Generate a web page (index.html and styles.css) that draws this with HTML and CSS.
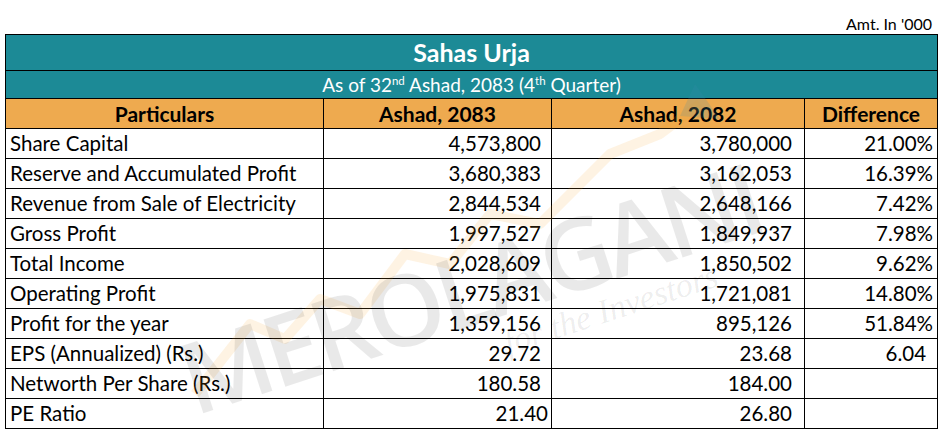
FILE: index.html
```html
<!DOCTYPE html>
<html>
<head>
<meta charset="utf-8">
<link rel="stylesheet" href="styles.css">
</head>
<body>
<div class="page">
  <div class="unit">Amt. In '000</div>
  <div class="table-wrap">
    <table class="fin">
      <colgroup>
        <col class="c1"><col class="c2"><col class="c3"><col class="c4">
      </colgroup>
      <tr class="title"><td colspan="4">Sahas Urja</td></tr>
      <tr class="sub"><td colspan="4">As of 32<sup>nd</sup> Ashad, 2083 (4<sup>th</sup> Quarter)</td></tr>
      <tr class="head"><td>Particulars</td><td>Ashad, 2083</td><td>Ashad, 2082</td><td>Difference</td></tr>
      <tr><td class="lbl">Share Capital</td><td class="n2">4,573,800</td><td class="n3">3,780,000</td><td class="n4">21.00%</td></tr>
      <tr><td class="lbl">Reserve and Accumulated Profit</td><td class="n2">3,680,383</td><td class="n3">3,162,053</td><td class="n4">16.39%</td></tr>
      <tr><td class="lbl">Revenue from Sale of Electricity</td><td class="n2">2,844,534</td><td class="n3">2,648,166</td><td class="n4">7.42%</td></tr>
      <tr><td class="lbl">Gross Profit</td><td class="n2">1,997,527</td><td class="n3">1,849,937</td><td class="n4">7.98%</td></tr>
      <tr><td class="lbl">Total Income</td><td class="n2">2,028,609</td><td class="n3">1,850,502</td><td class="n4">9.62%</td></tr>
      <tr><td class="lbl">Operating Profit</td><td class="n2">1,975,831</td><td class="n3">1,721,081</td><td class="n4">14.80%</td></tr>
      <tr><td class="lbl">Profit for the year</td><td class="n2">1,359,156</td><td class="n3">895,126</td><td class="n4">51.84%</td></tr>
      <tr><td class="lbl">EPS (Annualized) (Rs.)</td><td class="n2">29.72</td><td class="n3">23.68</td><td class="n4 pad">6.04</td></tr>
      <tr><td class="lbl">Networth Per Share (Rs.)</td><td class="n2">180.58</td><td class="n3">184.00</td><td class="n4"></td></tr>
      <tr><td class="lbl">PE Ratio</td><td class="n2 last">21.40</td><td class="n3">26.80</td><td class="n4"></td></tr>
    </table>
    <div class="watermark" aria-hidden="true">
      <svg class="wm-chart" width="560" height="360" viewBox="0 0 560 360">
        <polyline points="5,330 60,260 95,275 130,235 170,250 215,190 260,200 300,150 350,160 420,90 470,70 510,40" fill="none" stroke="rgba(245,160,40,0.13)" stroke-width="10" stroke-linejoin="round"/>
        <polygon points="505,20 530,55 490,52" fill="rgba(60,140,170,0.18)"/>
      </svg>
      <div class="wm-text">MEROLAGANI</div>
      <div class="wm-script">for the Investors</div>
    </div>
  </div>
</div>
</body>
</html>
```
FILE: styles.css
```css
html, body {
  margin: 0;
  padding: 0;
  background: #ffffff;
}
.page {
  width: 944px;
  height: 436px;
  font-family: Lato, "Open Sans", sans-serif;
  color: #000;
  overflow: hidden;
}
.unit {
  font-size: 16px;
  text-align: right;
  padding: 14px 12px 0 0;
  height: 20px;
  line-height: 20px;
}
.table-wrap {
  position: relative;
  margin-left: 5px;
  width: 932px;
}
.fin {
  border-collapse: collapse;
  width: 932px;
  table-layout: fixed;
  position: relative;
  z-index: 1;
}
.c1 { width: 318px; }
.c2 { width: 228px; }
.c3 { width: 253px; }
.c4 { width: 133px; }
.fin td {
  border: 1px solid #000;
  padding: 0;
  height: 29px;
  font-size: 20.5px;
  line-height: 29px;
  white-space: nowrap;
  overflow: hidden;
}
.fin tr.title td {
  background: #1c8a96;
  color: #fff;
  font-weight: bold;
  font-size: 25px;
  text-align: center;
  height: 35px;
  line-height: 35px;
}
.fin tr.sub td {
  background: #1c8a96;
  color: #fff;
  font-size: 19px;
  text-align: center;
  height: 27px;
  line-height: 27px;
}
.fin sup {
  font-size: 11.5px;
  line-height: 0;
  vertical-align: 7px;
}
.fin tr.head td {
  background: #eeaa4f;
  font-weight: bold;
  font-size: 21px;
  text-align: center;
}
.fin td.lbl { padding-left: 4px; }
.fin td.n2 { text-align: right; padding-right: 10px; }
.fin td.n2.last { padding-right: 3px; }
.fin td.n3 { text-align: right; padding-right: 12px; }
.fin td.n4 { text-align: right; padding-right: 4px; }
.fin td.n4.pad { padding-right: 11px; }
.watermark {
  position: absolute;
  left: 0;
  top: 0;
  width: 932px;
  height: 396px;
  pointer-events: none;
  z-index: 2;
}
.wm-chart {
  position: absolute;
  left: 185px;
  top: 30px;
}
.wm-text {
  position: absolute;
  left: 190px;
  top: 304px;
  font-family: "Open Sans", sans-serif;
  font-size: 99px;
  line-height: 80px;
  height: 80px;
  font-weight: 600;
  letter-spacing: -5px;
  color: rgba(0, 0, 0, 0.085);
  transform: rotate(-18deg);
  transform-origin: left bottom;
  white-space: nowrap;
}
.wm-script {
  position: absolute;
  left: 505px;
  top: 292px;
  font-family: "Liberation Serif", serif;
  font-style: italic;
  font-size: 34px;
  line-height: 34px;
  color: rgba(0, 0, 0, 0.08);
  transform: rotate(-18deg);
  transform-origin: left bottom;
  white-space: nowrap;
}
```
